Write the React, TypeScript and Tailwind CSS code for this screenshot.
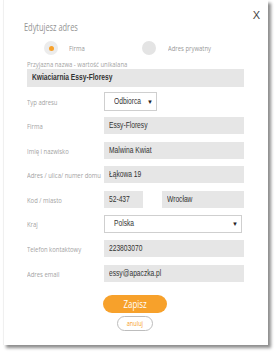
import React from "react";

function S({ children, className = "" }: { children: React.ReactNode; className?: string }) {
  return <span className={`inline-block whitespace-nowrap origin-left scale-x-[0.74] ${className}`}>{children}</span>;
}

const labelCls = "w-[77px] shrink-0 text-[8px] leading-[10px] text-[#a3a3a3] font-['Open_Sans',sans-serif]";
const inputCls = "h-[17px] bg-[#e6e6e6] flex items-center pl-[5px] text-[9px] text-[#333] font-['Liberation_Sans',Arial,sans-serif] overflow-hidden";

function Row({ label, children, top = "mt-[7px]" }: { label: string; children: React.ReactNode; top?: string }) {
  return (
    <div className={`flex items-center ${top}`}>
      <div className={labelCls}>
        <S className="scale-x-[0.72]">{label}</S>
      </div>
      {children}
    </div>
  );
}

function Arrow() {
  return <span className="text-[6px] text-[#222] leading-none">▼</span>;
}

export default function App() {
  return (
    <div className="w-[277px] h-[355px] bg-white">
      <div className="relative ml-[3px] w-[265px] h-[345px] bg-white border-l border-[#f0f0f0] shadow-[3px_3px_3px_rgba(0,0,0,0.45)] pl-[23px] pt-[20px]">
        <div className="absolute right-[8px] top-[7px] text-[11px] text-[#444] font-['Liberation_Sans',Arial,sans-serif]">X</div>
        <div className="ml-[-3px] text-[10px] leading-[14px] text-[#939393] font-['Open_Sans',sans-serif]">
          <S className="scale-x-[0.7]">Edytujesz adres</S>
        </div>
        <div className="flex items-center mt-[7px] h-[14px]">
          <div className="ml-[17px] w-[14px] h-[14px] rounded-full bg-[#ececec] flex items-center justify-center shrink-0">
            <div className="w-[5px] h-[5px] rounded-full bg-[#f7a12b]" />
          </div>
          <div className="ml-[11px] w-[73px] text-[8px] text-[#999] font-['Open_Sans',sans-serif]">
            <S className="scale-x-[0.72]">Firma</S>
          </div>
          <div className="w-[14px] h-[14px] rounded-full bg-[#e4e4e4] shrink-0" />
          <div className="ml-[12px] text-[8px] text-[#999] font-['Open_Sans',sans-serif]">
            <S className="scale-x-[0.72]">Adres prywatny</S>
          </div>
        </div>
        <div className="mt-[3px] text-[8px] leading-[11px] text-[#a3a3a3] font-['Open_Sans',sans-serif]">
          <S className="scale-x-[0.72]">Przyjazna nazwa - wartość unikalana</S>
        </div>
        <div className="w-[217px] h-[18px] bg-[#e6e6e6] flex items-center pl-[5px] text-[9px] font-bold text-[#333] font-['Liberation_Sans',Arial,sans-serif]">
          <S className="scale-x-[0.66]">Kwiaciarnia Essy-Floresy</S>
        </div>
        <Row label="Typ adresu" top="mt-[5px]">
          <div className="w-[53px] h-[19px] bg-white border border-[#cfcfcf] flex items-center pl-[9px] pr-[3px] text-[9px] text-[#333] font-['Liberation_Sans',Arial,sans-serif]">
            <div className="flex-1 min-w-0">
              <S className="scale-x-[0.68]">Odbiorca</S>
            </div>
            <Arrow />
          </div>
        </Row>
        <Row label="Firma" top="mt-[6px]">
          <div className={`${inputCls} w-[140px]`}><S>Essy-Floresy</S></div>
        </Row>
        <Row label="Imię i nazwisko" top="mt-[8px]">
          <div className={`${inputCls} w-[140px]`}><S className="scale-x-[0.8]">Malwina Kwiat</S></div>
        </Row>
        <Row label="Adres / ulica/ numer domu">
          <div className={`${inputCls} w-[140px]`}><S>Łąkowa 19</S></div>
        </Row>
        <Row label="Kod / miasto" top="mt-[8px]">
          <div className={`${inputCls} w-[39px]`}><S>52-437</S></div>
          <div className={`${inputCls} w-[82px] ml-[19px]`}><S>Wrocław</S></div>
        </Row>
        <Row label="Kraj">
          <div className="w-[138px] h-[18px] bg-white border border-[#cfcfcf] flex items-center pl-[9px] pr-[3px] text-[9px] text-[#333] font-['Liberation_Sans',Arial,sans-serif]">
            <div className="flex-1 min-w-0">
              <S className="scale-x-[0.7]">Polska</S>
            </div>
            <Arrow />
          </div>
        </Row>
        <Row label="Telefon kontaktowy">
          <div className={`${inputCls} w-[140px]`}><S>223803070</S></div>
        </Row>
        <Row label="Adres email" top="mt-[8px]">
          <div className={`${inputCls} w-[140px]`}><S>essy@apaczka.pl</S></div>
        </Row>
        <div className="ml-[76px] mt-[13px] w-[64px] flex flex-col items-center">
          <div className="w-[64px] h-[18px] rounded-full bg-[#f7a12b] flex items-center justify-center text-[11px] text-white font-['Open_Sans',sans-serif]">
            <span className="inline-block whitespace-nowrap scale-x-[0.72]">Zapisz</span>
          </div>
          <div className="mt-[3px] w-[36px] h-[15px] rounded-full border border-[#bdbdbd] bg-white flex items-center justify-center text-[7.5px] text-[#f7a12b] font-['Open_Sans',sans-serif]">
            <span className="inline-block whitespace-nowrap scale-x-[0.75]">anuluj</span>
          </div>
        </div>
      </div>
    </div>
  );
}
